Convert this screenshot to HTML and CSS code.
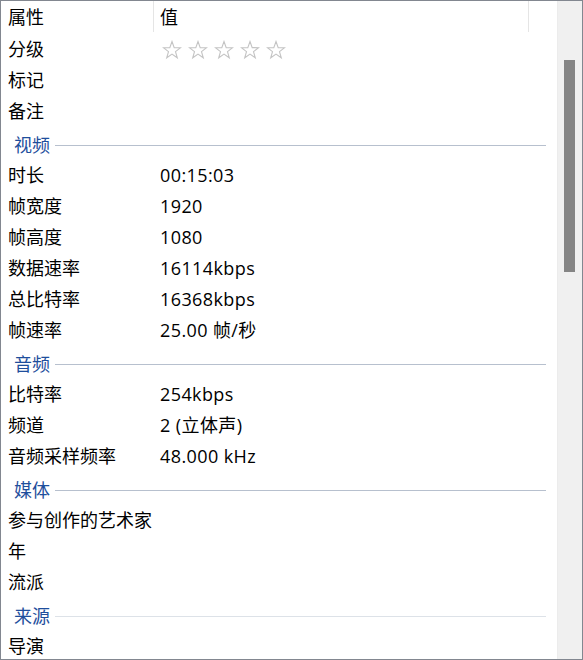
FILE: index.html
```html
<!DOCTYPE html>
<html lang="zh-CN">
<head>
<meta charset="utf-8">
<title>详细信息</title>
<link rel="stylesheet" href="styles.css">
</head>
<body>
<div class="panel">
  <div class="content">
    <div class="header">
      <div class="hcell hprop">属性</div>
      <div class="hcell hval">值</div>
      <div class="hcell hrest"></div>
    </div>
    <div class="row"><div class="prop">分级</div><div class="val stars">
      <svg class="star" viewBox="0 0 20 20"><path d="M10 1.5 L12.2 7.6 L18.6 7.7 L13.5 11.6 L15.3 17.8 L10 14.1 L4.7 17.8 L6.5 11.6 L1.4 7.7 L7.8 7.6 Z"/></svg>
      <svg class="star" viewBox="0 0 20 20"><path d="M10 1.5 L12.2 7.6 L18.6 7.7 L13.5 11.6 L15.3 17.8 L10 14.1 L4.7 17.8 L6.5 11.6 L1.4 7.7 L7.8 7.6 Z"/></svg>
      <svg class="star" viewBox="0 0 20 20"><path d="M10 1.5 L12.2 7.6 L18.6 7.7 L13.5 11.6 L15.3 17.8 L10 14.1 L4.7 17.8 L6.5 11.6 L1.4 7.7 L7.8 7.6 Z"/></svg>
      <svg class="star" viewBox="0 0 20 20"><path d="M10 1.5 L12.2 7.6 L18.6 7.7 L13.5 11.6 L15.3 17.8 L10 14.1 L4.7 17.8 L6.5 11.6 L1.4 7.7 L7.8 7.6 Z"/></svg>
      <svg class="star" viewBox="0 0 20 20"><path d="M10 1.5 L12.2 7.6 L18.6 7.7 L13.5 11.6 L15.3 17.8 L10 14.1 L4.7 17.8 L6.5 11.6 L1.4 7.7 L7.8 7.6 Z"/></svg>
    </div></div>
    <div class="row"><div class="prop">标记</div><div class="val"></div></div>
    <div class="row"><div class="prop">备注</div><div class="val"></div></div>

    <div class="group"><span class="gtitle">视频</span><span class="gline"></span></div>
    <div class="row"><div class="prop">时长</div><div class="val">00:15:03</div></div>
    <div class="row"><div class="prop">帧宽度</div><div class="val">1920</div></div>
    <div class="row"><div class="prop">帧高度</div><div class="val">1080</div></div>
    <div class="row"><div class="prop">数据速率</div><div class="val">16114kbps</div></div>
    <div class="row"><div class="prop">总比特率</div><div class="val">16368kbps</div></div>
    <div class="row"><div class="prop">帧速率</div><div class="val">25.00 帧/秒</div></div>

    <div class="group"><span class="gtitle">音频</span><span class="gline"></span></div>
    <div class="row"><div class="prop">比特率</div><div class="val">254kbps</div></div>
    <div class="row"><div class="prop">频道</div><div class="val">2 (立体声)</div></div>
    <div class="row"><div class="prop">音频采样频率</div><div class="val">48.000 kHz</div></div>

    <div class="group"><span class="gtitle">媒体</span><span class="gline"></span></div>
    <div class="row"><div class="prop">参与创作的艺术家</div><div class="val"></div></div>
    <div class="row"><div class="prop">年</div><div class="val"></div></div>
    <div class="row"><div class="prop">流派</div><div class="val"></div></div>

    <div class="group group-light"><span class="gtitle">来源</span><span class="gline"></span></div>
    <div class="row"><div class="prop">导演</div><div class="val"></div></div>
  </div>
  <div class="scrollbar">
    <div class="thumb"></div>
  </div>
</div>
</body>
</html>
```
FILE: styles.css
```css
html, body {
  margin: 0;
  padding: 0;
  background: #ffffff;
}

.panel {
  width: 583px;
  height: 660px;
  box-sizing: border-box;
  border: 1px solid #828790;
  display: flex;
  overflow: hidden;
  font-family: "Open Sans", "Noto Sans CJK SC", sans-serif;
  font-size: 18px;
  color: #000000;
}

.content {
  flex: 1;
  min-width: 0;
  overflow: hidden;
}

.header {
  display: flex;
  height: 32px;
}

.hcell {
  line-height: 32px;
  white-space: nowrap;
  box-sizing: border-box;
}

.hprop {
  width: 153px;
  padding-left: 7px;
  border-right: 1px solid #e5e5e5;
  height: 31px;
}

.hval {
  width: 375px;
  padding-left: 6px;
  border-right: 1px solid #e5e5e5;
  height: 31px;
}

.hrest {
  flex: 1;
}

.row {
  display: flex;
  height: 31px;
  box-sizing: border-box;
  padding-top: 2px;
  line-height: 29px;
  white-space: nowrap;
}

.prop {
  width: 153px;
  padding-left: 7px;
  box-sizing: border-box;
}

.val {
  flex: 1;
  padding-left: 6px;
  letter-spacing: 0.4px;
}

.stars {
  display: flex;
  align-items: center;
  gap: 6px;
  padding-left: 8px;
}

.star {
  width: 20px;
  height: 20px;
  fill: none;
  stroke: #c4c4c4;
  stroke-width: 1.1;
  stroke-linejoin: miter;
}

.group {
  display: flex;
  align-items: center;
  height: 33px;
  box-sizing: border-box;
  padding-top: 5px;
  padding-left: 13px;
  padding-right: 11px;
}

.gtitle {
  color: #1e4e9c;
  line-height: 28px;
  white-space: nowrap;
}

.gline {
  flex: 1;
  height: 1px;
  margin-left: 5px;
  background: #b7c0ce;
}

.group-light .gline {
  background: #dde2e8;
}

.scrollbar {
  width: 25px;
  flex: none;
  background: #f0f0f0;
  border-left: 1px solid #ececec;
  box-sizing: border-box;
  padding-top: 59px;
  padding-left: 6px;
}

.thumb {
  width: 11px;
  height: 212px;
  background: #858585;
}
```
